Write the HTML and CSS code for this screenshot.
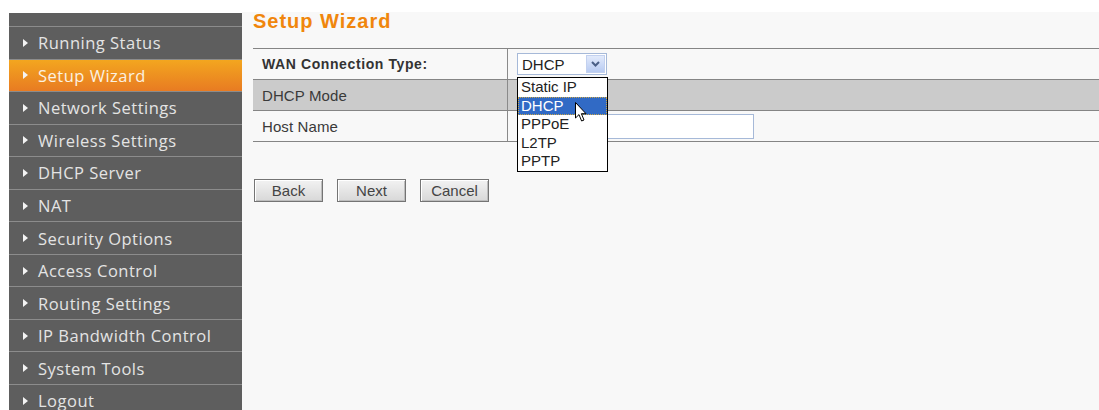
FILE: index.html
```html
<!DOCTYPE html>
<html lang="en">
<head>
<meta charset="utf-8">
<title>Setup Wizard</title>
<link rel="stylesheet" href="styles.css">
</head>
<body>
<div class="page">
  <nav class="menu">
    <div class="menu-top"></div>
    <a class="menu-item">Running Status</a>
    <a class="menu-item active">Setup Wizard</a>
    <a class="menu-item">Network Settings</a>
    <a class="menu-item">Wireless Settings</a>
    <a class="menu-item">DHCP Server</a>
    <a class="menu-item">NAT</a>
    <a class="menu-item">Security Options</a>
    <a class="menu-item">Access Control</a>
    <a class="menu-item">Routing Settings</a>
    <a class="menu-item">IP Bandwidth Control</a>
    <a class="menu-item">System Tools</a>
    <a class="menu-item">Logout</a>
  </nav>

  <main class="content">
    <h1 class="title">Setup Wizard</h1>

    <div class="form">
      <div class="row">
        <div class="label strong">WAN Connection Type:</div>
        <div class="value">
          <div class="select-wrap">
            <div class="select">
              <span class="select-text">DHCP</span>
              <span class="select-btn">
                <svg width="9" height="6" viewBox="0 0 9 6"><path d="M1 1 L4.5 4.5 L8 1" fill="none" stroke="#4a5f86" stroke-width="2"/></svg>
              </span>
            </div>
            <ul class="options">
              <li class="option">Static IP</li>
              <li class="option selected">DHCP</li>
              <li class="option">PPPoE</li>
              <li class="option">L2TP</li>
              <li class="option">PPTP</li>
              <svg class="cursor" width="13" height="21" viewBox="0 0 13 21">
                <path d="M0.5 0.5 L0.5 16 L4 12.6 L6.6 19 L9 18 L6.4 11.7 L11 11.7 Z" fill="#fff" stroke="#000" stroke-width="1" stroke-linejoin="round"/>
              </svg>
            </ul>
          </div>
        </div>
      </div>
      <div class="row shaded">
        <div class="label">DHCP Mode</div>
        <div class="value"></div>
      </div>
      <div class="row">
        <div class="label">Host Name</div>
        <div class="value"><input class="text-input" type="text"></div>
      </div>
    </div>

    <div class="buttons">
      <button class="btn">Back</button>
      <button class="btn">Next</button>
      <button class="btn">Cancel</button>
    </div>
  </main>
</div>
</body>
</html>
```

FILE: styles.css
```css
html, body {
  margin: 0;
  padding: 0;
  background: #ffffff;
  overflow: hidden;
}

.page {
  display: flex;
  padding: 12px 0 0 9px;
  height: 398px;
}

/* left navigation */
.menu {
  width: 233px;
  flex: none;
  margin-top: 1px;
  background: #5e5e5e;
  font-family: "Open Sans", "DejaVu Sans", sans-serif;
  font-size: 16.5px;
  letter-spacing: 0.5px;
  overflow: hidden;
}

.menu-top {
  height: 13px;
}

.menu-item {
  display: flex;
  align-items: center;
  height: 31.55px;
  border-top: 1px solid #8c8c8c;
  padding-left: 29px;
  color: #e4e4e4;
  position: relative;
  white-space: nowrap;
}

.menu-item::before {
  content: "";
  position: absolute;
  left: 14px;
  top: 50%;
  margin-top: -4px;
  border-left: 5px solid #f4f4f4;
  border-top: 4px solid transparent;
  border-bottom: 4px solid transparent;
}

.menu-item.active {
  background: linear-gradient(#f3a61f, #e87b22);
  color: #fbf1e2;
}

/* main panel */
.content {
  flex: 1;
  background: #f8f8f8;
  padding-left: 11px;
  font-family: "Liberation Sans", Arial, sans-serif;
  font-size: 15px;
  color: #3a3a3a;
}

.title {
  margin: 0 0 18px;
  font-family: "Liberation Sans", Arial, sans-serif;
  font-size: 20px;
  line-height: 18px;
  font-weight: bold;
  letter-spacing: 1px;
  color: #f0860c;
}

.form {
  border-bottom: 1px solid #858585;
}

.row {
  display: flex;
  height: 30px;
  border-top: 1px solid #858585;
}

.row.shaded {
  background: #cbcbcb;
}

.label {
  width: 255px;
  flex: none;
  box-sizing: border-box;
  border-right: 1px solid #8a8a8a;
  padding-left: 9px;
  display: flex;
  align-items: center;
  letter-spacing: 0.1px;
}

.label.strong {
  font-weight: bold;
  font-size: 14px;
  letter-spacing: 0.6px;
  color: #333;
}

.value {
  flex: 1;
  display: flex;
  align-items: center;
  padding-left: 9px;
}

/* combo box */
.select-wrap {
  position: relative;
}

.select {
  width: 90px;
  height: 22px;
  box-sizing: border-box;
  border: 1px solid #a6b9d8;
  background: #fff;
  display: flex;
  align-items: center;
  justify-content: space-between;
  padding: 0 1px 0 4px;
  color: #222;
}

.select-btn {
  width: 19px;
  height: 18px;
  box-sizing: border-box;
  border: 1px solid #c3d1ef;
  background: linear-gradient(#e2eafb, #b8cbf2);
  display: flex;
  align-items: center;
  justify-content: center;
}

.options {
  position: absolute;
  left: 0;
  top: 24px;
  width: 91px;
  margin: 0;
  padding: 0;
  list-style: none;
  box-sizing: border-box;
  border: 1px solid #000;
  background: #fff;
  z-index: 2;
}

.option {
  height: 18.6px;
  line-height: 18.6px;
  padding-left: 3px;
  color: #222;
}

.option.selected {
  background: #316ac5;
  color: #fff;
  outline: 1px dotted #c9a54a;
  outline-offset: -1px;
}

.cursor {
  position: absolute;
  left: 57px;
  top: 24px;
}

.text-input {
  width: 237px;
  height: 25px;
  box-sizing: border-box;
  border: 1px solid #a6b9d8;
  background: #fff;
  margin: 0;
  padding: 0;
  outline: none;
}

/* wizard buttons */
.buttons {
  display: flex;
  gap: 14px;
  margin: 37px 0 0 1px;
}

.btn {
  width: 69px;
  height: 23px;
  padding: 0;
  border: 1px solid #747474;
  box-shadow: inset 1px 1px 0 #ffffff, inset -1px -1px 0 #bdbdbd;
  background: linear-gradient(#f2f2f2, #d8d8d8);
  font-family: "Liberation Sans", Arial, sans-serif;
  font-size: 15px;
  color: #444;
}
```
